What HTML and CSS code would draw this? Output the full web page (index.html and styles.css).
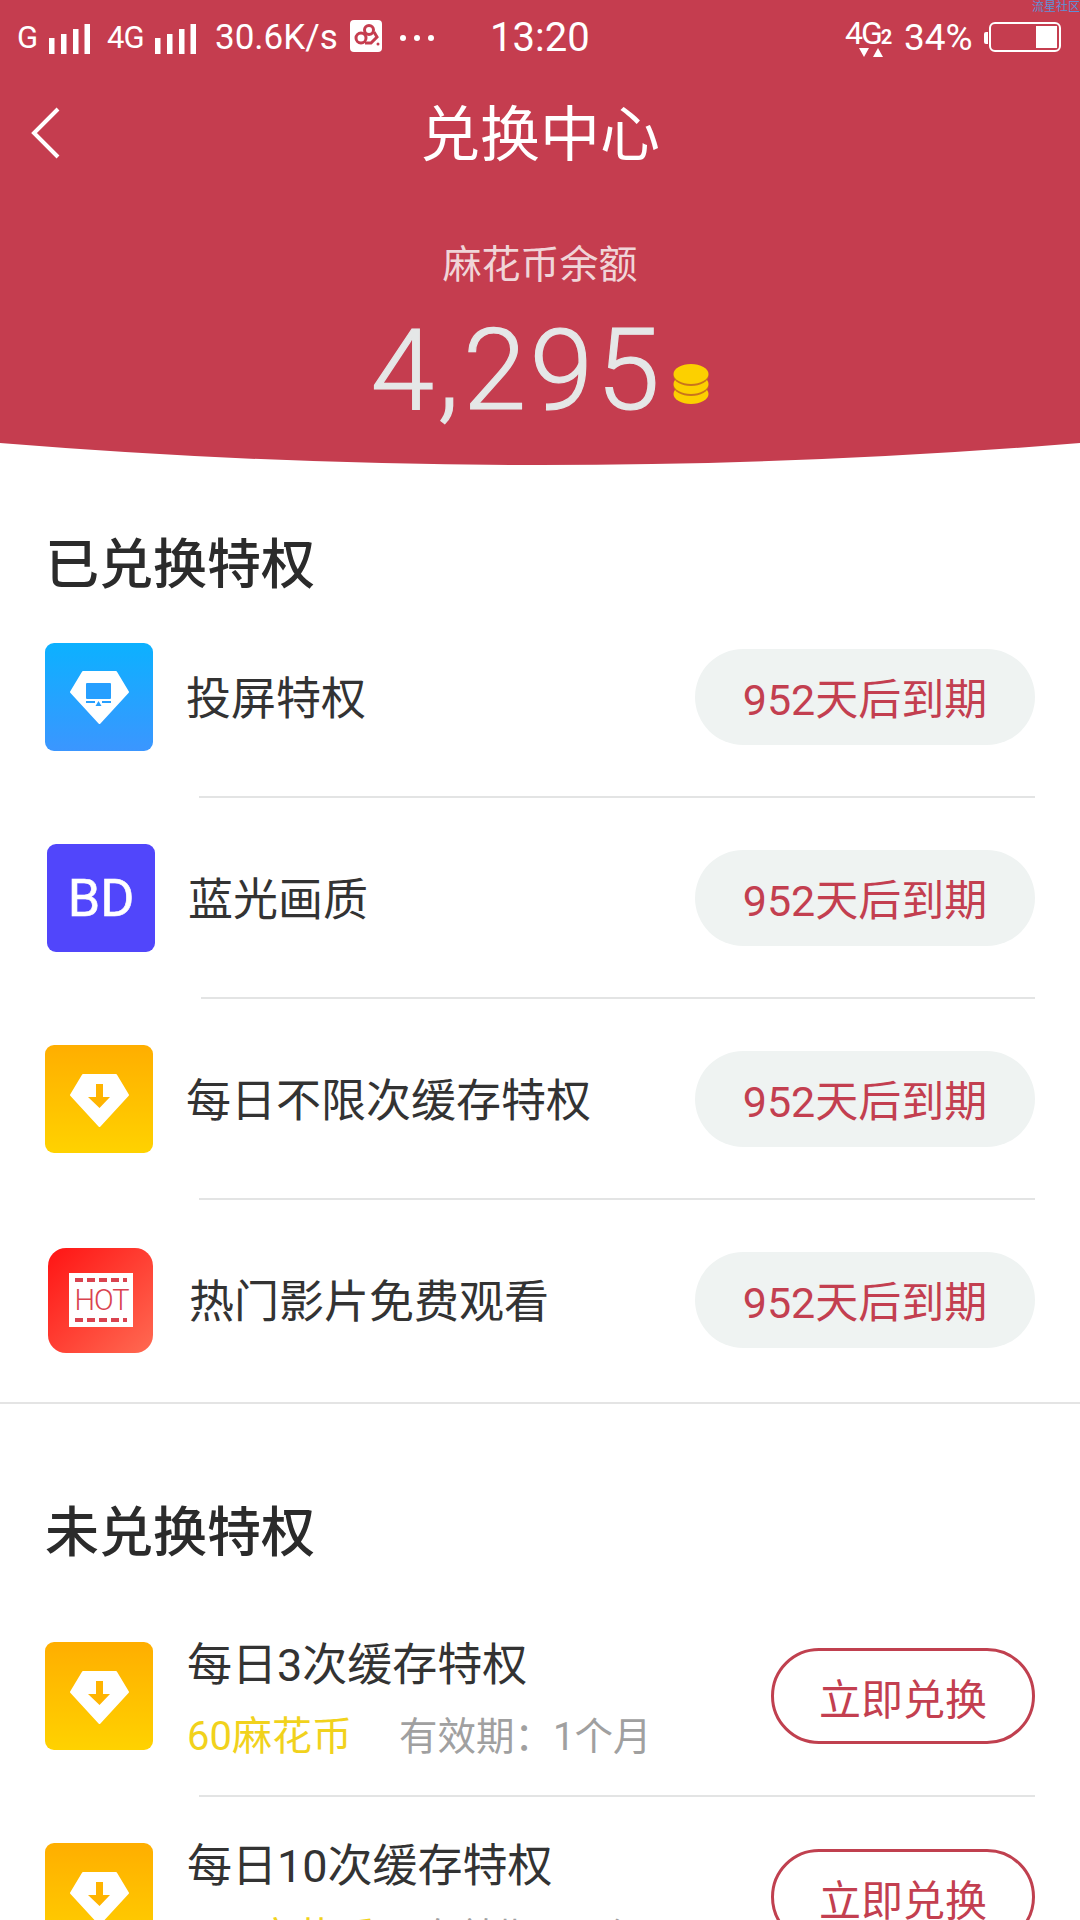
FILE: index.html
```html
<!DOCTYPE html>
<html lang="zh-CN">
<head>
<meta charset="utf-8">
<title>兑换中心</title>
<link rel="stylesheet" href="styles.css">
</head>
<body>
<div class="page">
  <svg width="0" height="0" class="defs">
    <defs>
      <linearGradient id="gBlue" x1="0" y1="0" x2="0" y2="1"><stop offset="0" stop-color="#0cb1ff"/><stop offset="1" stop-color="#3b96ff"/></linearGradient>
      <linearGradient id="gGold" x1="0" y1="0" x2="0" y2="1"><stop offset="0" stop-color="#ffae00"/><stop offset="1" stop-color="#ffd200"/></linearGradient>
      <symbol id="dlIcon" viewBox="0 0 108 108">
        <rect width="108" height="108" rx="9" fill="url(#gGold)"/>
        <path d="M38 30H71L83 50 54.5 81 26 50Z" fill="#fff" stroke="#fff" stroke-width="2" stroke-linejoin="round"/>
        <path d="M51 39H58V52H65L54.500 63 43 52H51Z" fill="#ffb400"/>
      </symbol>
    </defs>
  </svg>

  <header class="hero">
    <div class="watermark">流星社区</div>
    <div class="status">
      <span class="st st-g">G</span>
      <svg class="bars" width="42" height="32" viewBox="0 0 42 32"><path d="M0 16h5.500v16H0zM12 12h5.500v20H12zM24 7h5.500v25H24zM35.500 2H41v30h-5.500z" fill="#fff"/></svg>
      <span class="st st-4g">4G</span>
      <svg class="bars" width="42" height="32" viewBox="0 0 42 32"><path d="M0 16h5.500v16H0zM12 12h5.500v20H12zM24 7h5.500v25H24zM35.500 2H41v30h-5.500z" fill="#fff"/></svg>
      <span class="st st-speed">30.6K/s</span>
      <svg class="app" width="32" height="32" viewBox="0 0 32 32"><rect width="32" height="32" rx="4" fill="#fff"/><circle cx="11" cy="18" r="5" fill="none" stroke="#c53d4f" stroke-width="3"/><circle cx="19" cy="10" r="4.500" fill="none" stroke="#c53d4f" stroke-width="3"/><path d="M15 23h6l6-6-3-5" fill="none" stroke="#c53d4f" stroke-width="3"/><circle cx="28" cy="24" r="1.500" fill="#c53d4f"/></svg>
      <span class="dots"><i></i><i></i><i></i></span>
      <span class="st st-time">13:20</span>
      <span class="net"><span class="net-main">4G<b>2</b></span><svg width="24" height="9" viewBox="0 0 24 9" class="net-arrows"><path d="M0 0h10L5 9zM14 9h10l-5-9z" fill="#fff"/></svg></span>
      <span class="st st-batt">34%</span>
      <span class="batt-tip"></span>
      <span class="batt"><span class="batt-fill"></span></span>
    </div>
    <div class="nav">
      <svg class="back" width="30" height="52" viewBox="0 0 30 52"><path d="M27 2 3 26 27 50" fill="none" stroke="#fff" stroke-width="4"/></svg>
      <h1 class="title">兑换中心</h1>
    </div>
    <div class="bal-label">麻花币余额</div>
    <div class="bal">
      <span class="bal-num">4,295</span>
      <svg class="coin" width="36" height="42" viewBox="0 0 36 42"><ellipse cx="18" cy="31" rx="17.500" ry="10" fill="#fcd000"/><ellipse cx="18" cy="23" rx="17.500" ry="10" fill="#c9741c"/><ellipse cx="18" cy="21" rx="17.500" ry="10" fill="#fcd000"/><ellipse cx="18" cy="13" rx="17.500" ry="10" fill="#c9741c"/><ellipse cx="18" cy="11" rx="17.500" ry="10" fill="#fcd000"/></svg>
    </div>
  </header>
  <svg class="curve" width="1080" height="22" viewBox="0 0 1080 22" preserveAspectRatio="none"><path d="M0 0H1080V0Q540 44 0 0Z" fill="#c53d4f"/></svg>

  <section class="owned">
    <h2 class="heading">已兑换特权</h2>

    <div class="row">
      <svg class="ico" width="108" height="108" viewBox="0 0 108 108"><rect width="108" height="108" rx="9" fill="url(#gBlue)"/><path d="M38 29H71L83 49 54.500 80 26 49Z" fill="#fff" stroke="#fff" stroke-width="2" stroke-linejoin="round"/><rect x="41" y="40" width="25" height="16" rx="1" fill="#269fff"/><path d="M41 59h9M57 59h9" stroke="#269fff" stroke-width="2"/><path d="M53.500 58l3 5h-6z" fill="#269fff"/></svg>
      <span class="name">投屏特权</span>
      <span class="pill">952天后到期</span>
    </div>
    <div class="rule"></div>

    <div class="row">
      <span class="ico-bd">BD</span>
      <span class="name">蓝光画质</span>
      <span class="pill">952天后到期</span>
    </div>
    <div class="rule rule-shift"></div>

    <div class="row">
      <svg class="ico" width="108" height="108"><use href="#dlIcon"/></svg>
      <span class="name">每日不限次缓存特权</span>
      <span class="pill">952天后到期</span>
    </div>
    <div class="rule"></div>

    <div class="row">
      <span class="ico-hot">
        <span class="film"><span class="perf"></span><span class="hot">HOT</span><span class="perf"></span></span>
      </span>
      <span class="name name-hot">热门影片免费观看</span>
      <span class="pill">952天后到期</span>
    </div>
  </section>

  <div class="band"></div>

  <section class="offers">
    <h2 class="heading">未兑换特权</h2>

    <div class="row">
      <svg class="ico" width="108" height="108"><use href="#dlIcon"/></svg>
      <div class="offer-text">
        <div class="name">每日3次缓存特权</div>
        <div class="sub"><span class="price">60麻花币</span><span class="term">有效期：1个月</span></div>
      </div>
      <span class="btn">立即兑换</span>
    </div>
    <div class="rule"></div>

    <div class="row">
      <svg class="ico" width="108" height="108"><use href="#dlIcon"/></svg>
      <div class="offer-text">
        <div class="name">每日10次缓存特权</div>
        <div class="sub"><span class="price">120麻花币</span><span class="term">有效期：1个月</span></div>
      </div>
      <span class="btn">立即兑换</span>
    </div>
  </section>
</div>
</body>
</html>
```

FILE: styles.css
```css
* { box-sizing: border-box; }
html, body { margin: 0; padding: 0; background: #fff; }
body { width: 1080px; height: 1920px; overflow: hidden; }
.page {
  width: 1080px;
  height: 1920px;
  overflow: hidden;
  font-family: Roboto, "Noto Sans CJK SC", sans-serif;
  color: #303030;
}
.defs { display: block; height: 0; }

.hero { position: relative; height: 443px; background: #c53d4f; color: #fff; }
.curve { display: block; }
.watermark {
  position: absolute; right: 0; top: 0;
  font-size: 12px; line-height: 14px; color: #5f8fd6;
}

.status { display: flex; align-items: center; height: 75px; padding-left: 17px; }
.st { line-height: 40px; white-space: nowrap; }
.st-g { font-size: 31px; width: 32px; }
.st-4g { font-size: 31px; width: 48px; margin-left: 16px; letter-spacing: -1px; }
.st-speed { font-size: 35px; margin-left: 18px; width: 135px; }
.app { margin-right: 18px; margin-top: -3px; }
.dots { display: flex; gap: 8px; width: 35px; }
.dots i { width: 6px; height: 6px; border-radius: 50%; background: #fff; }
.st-time { font-size: 40px; margin-left: 55px; width: 112px; }
.net { position: relative; margin-left: 243px; width: 59px; height: 48px; }
.net-main { position: absolute; left: 0; top: -1px; font-size: 32px; line-height: 40px; letter-spacing: -2px; white-space: nowrap; }
.net-main b { font-size: 20px; letter-spacing: 0; }
.net-arrows { position: absolute; left: 14px; top: 34px; }
.st-batt { font-size: 37px; width: 80px; }
.batt-tip { width: 4px; height: 12px; background: #fff; border-radius: 2px 0 0 2px; }
.batt {
  display: flex; justify-content: flex-end;
  width: 72px; height: 30px; margin-left: 1px; margin-top: -2px; padding: 2px;
  border: 2px solid #fff; border-radius: 6px;
}
.batt-fill { width: 21px; background: #fff; }

.nav { position: relative; display: flex; justify-content: center; align-items: center; height: 95px; margin-top: 13px; }
.back { position: absolute; left: 31px; top: 19px; }
.title { margin: 0; font-size: 60px; line-height: 70px; font-weight: 400; }

.bal-label { margin-top: 57px; text-align: center; font-size: 39px; line-height: 50px; color: #f0d5d8; }
.bal { display: flex; justify-content: center; align-items: flex-end; gap: 10px; margin-top: 24px; }
.bal-num { font-size: 114px; line-height: 112px; font-weight: 300; letter-spacing: 3.5px; color: #e5e7e7; -webkit-text-stroke: 1.2px #e5e7e7; }
.coin { margin-bottom: 21px; }

.owned { padding: 71px 45px 0; }
.offers { padding: 100px 45px 0; }
.heading { margin: 0 0 47px; font-size: 54px; line-height: 60px; font-weight: 500; color: #2b2b2b; }
.offers .heading { margin-bottom: 78px; }

.row { display: flex; align-items: center; height: 108px; }
.ico { flex: none; display: block; }
.name { font-size: 45px; line-height: 50px; color: #333; margin-left: 33px; }
.row > .name { padding-top: 6px; line-height: 56px; }
.rule { height: 2px; margin: 45px 0 46px 154px; background: #e3e4e4; }
.rule-shift { margin-left: 156px; }

.pill {
  margin-left: auto; width: 340px; height: 96px; border-radius: 48px;
  background: #eff3f2; color: #c33f50; font-size: 43px; padding-bottom: 2px;
  display: flex; align-items: center; justify-content: center;
}

.ico-bd {
  flex: none; display: flex; align-items: center; justify-content: center;
  width: 108px; height: 108px; margin-left: 2px; border-radius: 9px;
  background: #5146fb; color: #fff; font-size: 52px; -webkit-text-stroke: .6px #fff;
}
.ico-bd + .name { margin-left: 33px; }
.ico-hot {
  flex: none; display: flex; align-items: center; justify-content: center;
  width: 105px; height: 105px; margin-left: 3px; border-radius: 18px;
  background: linear-gradient(135deg, #ff1414, #ff6a52);
}
.film {
  display: flex; flex-direction: column; justify-content: space-between; align-items: stretch;
  width: 64px; height: 54px; padding: 5px 6px; background: #fff;
}
.perf { height: 4px; background: repeating-linear-gradient(90deg, #d9434f 0 8px, transparent 8px 12px); }
.hot { font-family: Roboto, sans-serif; font-weight: 300; font-size: 29px; line-height: 28px; color: #d9434f; text-align: center; letter-spacing: -1px; }
.name-hot { margin-left: 36px; }

.band { height: 2px; margin-top: 48px; background: #e4e4e4; }

.offer-text { align-self: flex-start; margin: -1px 0 0 34px; }
.offer-text .name { margin-left: 0; }
.sub { margin-top: 21px; font-size: 38.500px; line-height: 50px; display: flex; }
.price { color: #f1d21c; margin-right: 47px; white-space: nowrap; font-size: 40px; }
.term { color: #a0a0a0; white-space: nowrap; }

.btn {
  margin-left: auto; width: 264px; height: 96px; border-radius: 48px;
  border: 3px solid #c0404f; color: #c33f50; font-size: 42px;
  display: flex; align-items: center; justify-content: center;
}
```
